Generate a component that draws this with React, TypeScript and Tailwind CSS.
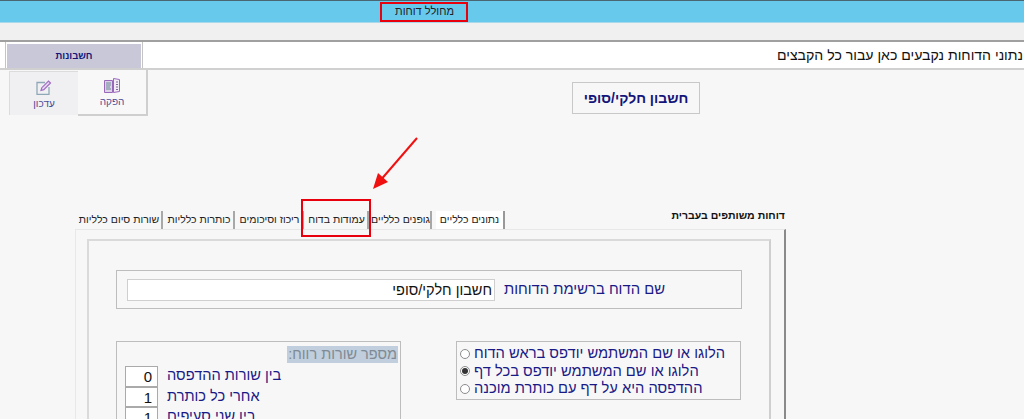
const font = 'font-["Liberation_Sans",Arial,sans-serif]';

const tabs = [
  { label: 'שורות סיום כלליות', w: 'w-[86px]' },
  { label: 'כותרות כלליות', w: 'w-[70px]' },
  { label: 'ריכוז וסיכומים', w: 'w-[67px]' },
  { label: 'עמודות בדוח', w: 'w-[63px]' },
  { label: 'גופנים כלליים', w: 'w-[61px]' },
];

const spacing = [
  { value: '0', label: 'בין שורות ההדפסה' },
  { value: '1', label: 'אחרי כל כותרת' },
  { value: '1', label: 'בין שני סעיפים' },
];

const logoOptions = [
  { label: 'הלוגו או שם המשתמש יודפס בראש הדוח', checked: false },
  { label: 'הלוגו או שם המשתמש יודפס בכל דף', checked: true },
  { label: 'ההדפסה היא על דף עם כותרת מוכנה', checked: false },
];

function PrintIcon() {
  return (
    <svg width="16" height="15" viewBox="0 0 16 15" fill="none">
      <path d="M.5 2.5h8v12h-8z" fill="#ddd3e6" stroke="#9a68bb" />
      <path d="M9.5.5l6 1v12l-6 1z" fill="#f1ecf5" stroke="#9a68bb" />
      <path d="M2 5h5M2 7h5M2 9h4M2 11h5" stroke="#6f8a98" />
      <path d="M12 4h2M12 6.5h2M12 9h2M12 11.5h2" stroke="#7f6a9a" />
    </svg>
  );
}

function EditIcon() {
  return (
    <svg width="16" height="15" viewBox="0 0 16 15" fill="none">
      <path d="M9 2.5H1v12h12V7" stroke="#8fa8b8" strokeWidth="1.3" />
      <path d="M5 10.5l.8-2.8L12.5 1l2 2-6.7 6.7z" fill="#e6d9ef" stroke="#a06cc4" strokeWidth="1.2" />
    </svg>
  );
}

export default function App() {
  return (
    <div className={`${font} relative h-[419px] w-[1024px] overflow-hidden bg-[#f7f7f7]`}>
      <div className="flex h-[23px] border-t border-b border-t-[#4a6672] border-b-[#a8d8ea] bg-[#67c9ec] pl-[383px] pt-[3px]">
        <span dir="rtl" className="w-[83px] text-center text-[11px] leading-[15px] text-[#222]">מחולל דוחות</span>
      </div>
      <div className="h-[17px] bg-[#f0f0f0]" />

      <div className="flex h-[30px] justify-between border-t-2 border-b-2 border-t-[#a0a0a0] border-b-[#d0d0d0] bg-white">
        <div className="ml-[5px] w-[138px] border-x border-[#c4c4c4] px-px pt-[2px]">
          <div dir="rtl" className="h-[24px] bg-[#c9c8d8] text-center text-[9.5px] font-bold leading-[24px] text-[#14147a]">חשבונות</div>
        </div>
        <div dir="rtl" className="w-[250px] whitespace-nowrap pr-[1px] text-[14.1px] leading-[26px] text-[#111]">
          נתוני הדוחות נקבעים כאן עבור כל הקבצים
        </div>
      </div>

      <div className="flex items-start">
        <div className="ml-[9px] flex items-start">
          <div className="mt-[1px] flex h-[44px] w-[69px] flex-col items-center border-l border-t border-[#dcdcdc] bg-[#f0f0f2] pt-[8px]">
            <EditIcon />
            <span dir="rtl" className="mt-[3px] text-[10px] leading-[12px] text-[#4a4a96]">עדכון</span>
          </div>
          <div className="flex h-[46px] w-[70px] flex-col items-center border-r-2 border-b-2 border-[#cfcfcf] bg-[#f8f8f8] pt-[8px]">
            <PrintIcon />
            <span dir="rtl" className="mt-[3px] text-[10px] leading-[12px] text-[#4a4a96]">הפקה</span>
          </div>
        </div>
        <div dir="rtl" className="ml-[424px] mt-[12px] flex h-[32px] w-[128px] items-center justify-center border border-[#c8c8c8] text-[14px] font-bold text-[#14147a]">
          חשבון חלקי/סופי
        </div>
      </div>

      <div className="mt-[93px] flex items-end pl-[77px]">
        <div className="flex gap-[2px]">
          {tabs.map((tab) => (
            <div
              key={tab.label}
              dir="rtl"
              className={`${tab.w} h-[18px] whitespace-nowrap border-r-2 border-[#a8a8a8] text-center text-[10.5px] leading-[17px] text-[#222]`}
            >
              {tab.label}
            </div>
          ))}
          <div dir="rtl" className="ml-[2px] h-[18px] w-[69px] whitespace-nowrap border-r-2 border-[#999] bg-white text-center text-[10.5px] leading-[17px] text-[#222]">
            נתונים כלליים
          </div>
        </div>
        <div dir="rtl" className="mb-[8px] ml-[166px] w-[114px] whitespace-nowrap text-right text-[10.5px] font-bold leading-[12px] text-[#111]">
          דוחות משותפים בעברית
        </div>
      </div>

      <div className="ml-[75px] h-[200px] w-[711px] border-t border-l border-r-2 border-t-[#e8e8e8] border-l-[#e8e8e8] border-r-[#8a8a8a] pl-[11px] pt-[9px]">
        <div className="h-[200px] w-[684px] border-2 border-[#dadada] border-r-[#cfcfcf] pl-[27px] pt-[29px]">
          <div className="flex h-[39px] w-[626px] items-center justify-between border border-[#bdbdbd] pl-[10px] pr-[76px]">
            <input
              dir="rtl"
              readOnly
              value="חשבון חלקי/סופי"
              className="h-[22px] w-[368px] border border-[#cfcfcf] bg-white px-[2px] text-[14.5px] text-[#111] outline-none"
            />
            <span dir="rtl" className="whitespace-nowrap text-[14.8px] text-[#1a1a86]">שם הדוח ברשימת הדוחות</span>
          </div>

          <div className="mt-[32px] flex items-start">
            <div className="h-[80px] w-[285px] border border-[#bdbdbd] pl-[8px] pt-[4px]">
              <div className="flex justify-end pr-[2px]">
                <span dir="rtl" className="bg-[#c0cedd] px-px text-[14.5px] leading-[17px] text-[#7f8a94]">מספר שורות רווח:</span>
              </div>
              <div className="mt-[3px] flex flex-col">
                {spacing.map((row, i) => (
                  <div key={i} className="flex h-[20.5px] items-center gap-[9px]">
                    <div className="h-[20.5px] w-[33px] border border-[#aaa] bg-white pr-[5px] text-right text-[15px] leading-[19px] text-[#111]">
                      {row.value}
                    </div>
                    <span dir="rtl" className="whitespace-nowrap text-[14.6px] text-[#1a1a86]">{row.label}</span>
                  </div>
                ))}
              </div>
            </div>

            <div className="ml-[55px] flex h-[59px] w-[285px] flex-col justify-center border border-[#bdbdbd] pl-[3px] pt-px">
              {logoOptions.map((opt) => (
                <div key={opt.label} className="flex h-[17.5px] items-center gap-[4px]">
                  <span className="flex h-[10px] w-[10px] items-center justify-center rounded-full border border-[#8c8c8c] bg-white">
                    {opt.checked && <span className="h-[6px] w-[6px] rounded-full bg-[#333]" />}
                  </span>
                  <span dir="rtl" className="whitespace-nowrap text-[14.7px] text-[#1a1a86]">{opt.label}</span>
                </div>
              ))}
            </div>
          </div>
        </div>
      </div>

      {/* annotations drawn over the screenshot */}
      <div className="absolute left-[380px] top-[2px] h-[20px] w-[88px] border-2 border-[#e8000d]" />
      <div className="absolute left-[301px] top-[199px] h-[38px] w-[70px] border-2 border-[#e8000d]" />
      <svg className="absolute left-[365px] top-[130px]" width="60" height="66" viewBox="0 0 60 66" fill="none">
        <path d="M52 8L14 52" stroke="#f01010" strokeWidth="2" />
        <path d="M8 59L13 43L23 52Z" fill="#f01010" />
      </svg>
    </div>
  );
}
